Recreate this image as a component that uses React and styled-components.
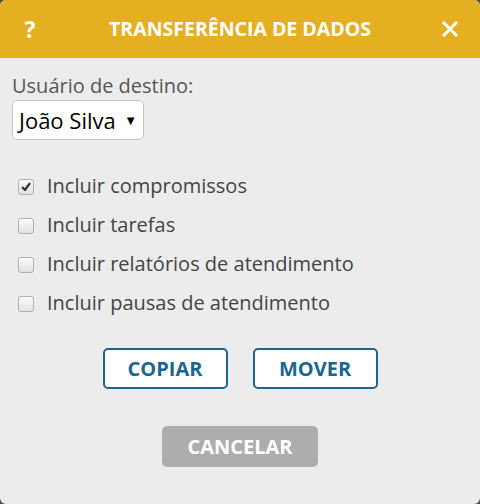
import styled, { createGlobalStyle } from "styled-components";

const GlobalStyle = createGlobalStyle`
  html, body {
    margin: 0;
    padding: 0;
    background: #4a4a4a;
  }
  body {
    font-family: "Open Sans", "Liberation Sans", sans-serif;
  }
`;

const Dialog = styled.div`
  width: 480px;
  height: 504px;
  background: #ececec;
  border-radius: 6px;
  overflow: hidden;
  display: flex;
  flex-direction: column;
`;

const Header = styled.div`
  height: 58px;
  background: #e5af22;
  display: grid;
  grid-template-columns: 60px 1fr 60px;
  align-items: center;
  color: #fff;
`;

const HeaderIcon = styled.button`
  background: none;
  border: none;
  color: #fff;
  font-family: inherit;
  font-weight: 700;
  font-size: 23px;
  padding: 0;
  display: flex;
  justify-content: center;
  align-items: center;
  cursor: pointer;
`;

const Title = styled.h1`
  margin: 0;
  font-size: 19.5px;
  font-weight: 700;
  text-align: center;
  margin-top: -2px;
`;

const Body = styled.div`
  padding: 16px 12px 0;
  display: flex;
  flex-direction: column;
`;

const Label = styled.label`
  font-size: 20px;
  color: #555;
  line-height: 24px;
`;

const SelectBox = styled.div`
  margin-top: 2px;
  align-self: flex-start;
  width: 132px;
  height: 40px;
  box-sizing: border-box;
  border: 1px solid #c4c4c4;
  border-radius: 5px;
  background: #fff;
  display: flex;
  align-items: center;
  padding: 0 6px 0 6px;
  justify-content: space-between;
  font-size: 22px;
  color: #000;
`;

const Caret = styled.span`
  font-size: 13px;
  color: #000;
`;

const Options = styled.div`
  margin-top: 33px;
  display: flex;
  flex-direction: column;
  gap: 13px;
  padding-left: 6px;
`;

const Option = styled.label`
  display: flex;
  align-items: center;
  gap: 13px;
  font-size: 20px;
  color: #444;
  line-height: 26px;
`;

const Box = styled.span`
  width: 14px;
  height: 14px;
  border: 1px solid #b0b0b0;
  border-radius: 3px;
  background: linear-gradient(#fbfbfb, #e2e2e2);
  display: flex;
  align-items: center;
  justify-content: center;
  margin-top: 1px;
`;

const Actions = styled.div`
  margin-top: 32px;
  display: flex;
  justify-content: center;
  gap: 25px;
`;

const OutlineButton = styled.button`
  width: 125px;
  height: 41px;
  box-sizing: border-box;
  border: 2px solid #1b6690;
  border-radius: 5px;
  background: #fff;
  color: #1b6690;
  font-family: inherit;
  font-weight: 700;
  font-size: 20px;
`;

const CancelRow = styled.div`
  margin-top: 37px;
  display: flex;
  justify-content: center;
`;

const CancelButton = styled.button`
  width: 156px;
  height: 41px;
  border: none;
  border-radius: 5px;
  background: #adadad;
  color: #fff;
  font-family: inherit;
  font-weight: 700;
  font-size: 20px;
`;

const options = [
  { label: "Incluir compromissos", checked: true },
  { label: "Incluir tarefas", checked: false },
  { label: "Incluir relatórios de atendimento", checked: false },
  { label: "Incluir pausas de atendimento", checked: false },
];

export default function App() {
  return (
    <>
      <GlobalStyle />
      <Dialog>
        <Header>
          <HeaderIcon>?</HeaderIcon>
          <Title>TRANSFERÊNCIA DE DADOS</Title>
          <HeaderIcon>
            <svg width="16" height="16" viewBox="0 0 16 16">
              <path d="M2 2L14 14M14 2L2 14" stroke="#fff" strokeWidth="3" strokeLinecap="square" />
            </svg>
          </HeaderIcon>
        </Header>
        <Body>
          <Label>Usuário de destino:</Label>
          <SelectBox>
            <span>João Silva</span>
            <Caret>▼</Caret>
          </SelectBox>
          <Options>
            {options.map((o) => (
              <Option key={o.label}>
                <Box>
                  {o.checked && (
                    <svg width="10" height="9" viewBox="0 0 10 9">
                      <path d="M1 5L4 8L9 1" stroke="#333" strokeWidth="2.2" fill="none" />
                    </svg>
                  )}
                </Box>
                {o.label}
              </Option>
            ))}
          </Options>
          <Actions>
            <OutlineButton>COPIAR</OutlineButton>
            <OutlineButton>MOVER</OutlineButton>
          </Actions>
          <CancelRow>
            <CancelButton>CANCELAR</CancelButton>
          </CancelRow>
        </Body>
      </Dialog>
    </>
  );
}
